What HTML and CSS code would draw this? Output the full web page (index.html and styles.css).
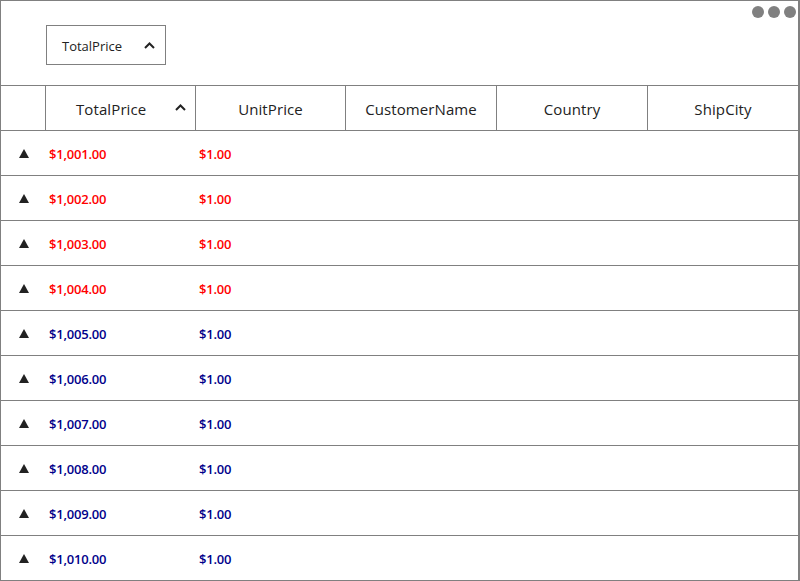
FILE: index.html
```html
<!DOCTYPE html>
<html>
<head>
<meta charset="utf-8">
<link rel="stylesheet" href="styles.css">
</head>
<body>
<div class="grid">
  <div class="group-area">
    <div class="chip">
      <span class="chip-label">TotalPrice</span>
      <svg class="chevron" width="11" height="7" viewBox="0 0 11 7"><path d="M1 6 L5.5 1.5 L10 6" fill="none" stroke="#222" stroke-width="2"/></svg>
    </div>
    <div class="dots"><span></span><span></span><span></span></div>
  </div>
  <div class="header">
    <div class="hcell indent"></div>
    <div class="hcell sorted"><span class="hlabel">TotalPrice</span>
      <svg class="chevron" width="11" height="7" viewBox="0 0 11 7"><path d="M1 6 L5.5 1.5 L10 6" fill="none" stroke="#222" stroke-width="2"/></svg>
    </div>
    <div class="hcell">UnitPrice</div>
    <div class="hcell">CustomerName</div>
    <div class="hcell">Country</div>
    <div class="hcell last">ShipCity</div>
  </div>
  <div class="row red"><div class="exp"><span class="tri"></span></div><div class="cell">$1,001.00</div><div class="cell">$1.00</div></div>
  <div class="row red"><div class="exp"><span class="tri"></span></div><div class="cell">$1,002.00</div><div class="cell">$1.00</div></div>
  <div class="row red"><div class="exp"><span class="tri"></span></div><div class="cell">$1,003.00</div><div class="cell">$1.00</div></div>
  <div class="row red"><div class="exp"><span class="tri"></span></div><div class="cell">$1,004.00</div><div class="cell">$1.00</div></div>
  <div class="row blue"><div class="exp"><span class="tri"></span></div><div class="cell">$1,005.00</div><div class="cell">$1.00</div></div>
  <div class="row blue"><div class="exp"><span class="tri"></span></div><div class="cell">$1,006.00</div><div class="cell">$1.00</div></div>
  <div class="row blue"><div class="exp"><span class="tri"></span></div><div class="cell">$1,007.00</div><div class="cell">$1.00</div></div>
  <div class="row blue"><div class="exp"><span class="tri"></span></div><div class="cell">$1,008.00</div><div class="cell">$1.00</div></div>
  <div class="row blue"><div class="exp"><span class="tri"></span></div><div class="cell">$1,009.00</div><div class="cell">$1.00</div></div>
  <div class="row blue"><div class="exp"><span class="tri"></span></div><div class="cell">$1,010.00</div><div class="cell">$1.00</div></div>
</div>
</body>
</html>
```

FILE: styles.css
```css
html, body {
  margin: 0;
  padding: 0;
  background: #fff;
}
.grid {
  width: 800px;
  height: 581px;
  box-sizing: border-box;
  border-style: solid;
  border-color: #808080;
  border-width: 1px 2px 0 1px;
  font-family: "Open Sans", "Noto Sans", sans-serif;
  color: #222;
  display: flex;
  flex-direction: column;
}
.group-area {
  height: 85px;
  border-bottom: 1px solid #808080;
  position: relative;
  display: flex;
  align-items: flex-start;
  padding: 24px 0 0 45px;
  box-sizing: border-box;
  flex: none;
}
.chip {
  width: 120px;
  height: 40px;
  box-sizing: border-box;
  border: 1px solid #808080;
  display: flex;
  align-items: center;
  padding: 0 10px 0 15px;
  font-size: 13px;
  letter-spacing: 0;
}
.chip-label { flex: 1; padding-top: 1px; }
.dots {
  position: absolute;
  top: 5px;
  right: 2px;
  display: flex;
  gap: 4px;
}
.dots span {
  width: 12px;
  height: 12px;
  border-radius: 50%;
  background: #808080;
}
.header {
  display: grid;
  grid-template-columns: 45px 150px 150px 151px 151px 150px;
  height: 45px;
  border-bottom: 1px solid #808080;
  box-sizing: border-box;
  flex: none;
}
.hcell {
  border-right: 1px solid #808080;
  display: flex;
  align-items: center;
  justify-content: center;
  font-size: 15px;
  letter-spacing: 0.1px;
  padding-top: 1px;
}
.hcell.last { border-right: none; }
.hcell.sorted {
  justify-content: flex-start;
  padding-left: 30px;
  padding-right: 9px;
}
.hcell.sorted .hlabel { flex: 1; }
.hcell.sorted .chevron { margin-top: -3px; }
.row {
  display: flex;
  height: 45px;
  border-bottom: 1px solid #808080;
  box-sizing: border-box;
  align-items: center;
  font-size: 13px;
  font-weight: 600;
  letter-spacing: -0.2px;
  flex: none;
}
.row.red { color: #ff0000; }
.row.blue { color: #00008b; }
.exp {
  width: 45px;
  display: flex;
  justify-content: center;
  padding-left: 1px;
  box-sizing: border-box;
}
.tri {
  width: 0;
  height: 0;
  border-left: 5px solid transparent;
  border-right: 5px solid transparent;
  border-bottom: 9px solid #222;
}
.cell {
  width: 150px;
  padding-left: 3px;
  box-sizing: border-box;
  padding-top: 1px;
}
```
